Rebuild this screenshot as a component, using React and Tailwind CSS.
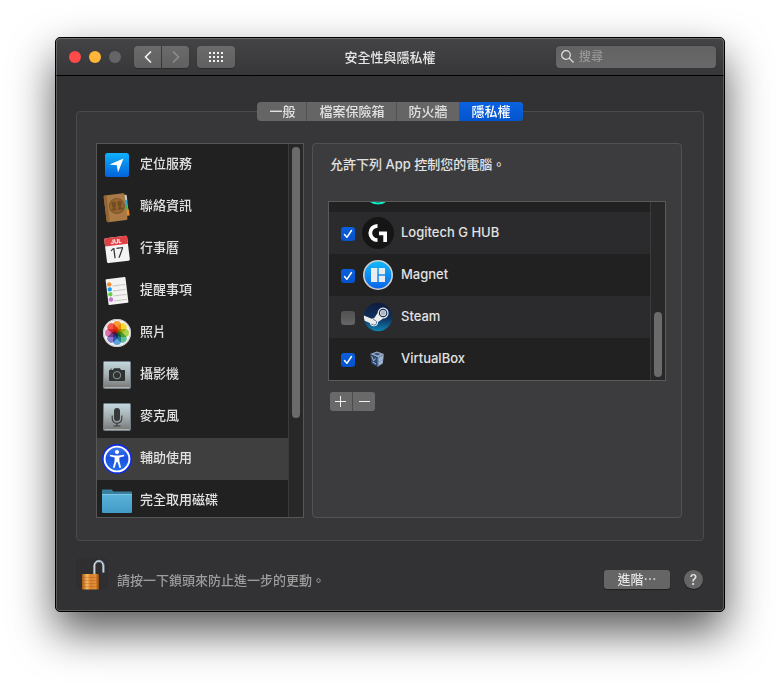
import { useState } from 'react';

function LocationIcon() {
  return (
    <svg viewBox="0 0 32 32" className="size-8">
      <defs>
        <linearGradient id="loc" x1="0" y1="0" x2="0" y2="1">
          <stop offset="0" stopColor="#0fb0fb" />
          <stop offset="1" stopColor="#0462da" />
        </linearGradient>
      </defs>
      <rect x="4" y="4" width="24" height="24" rx="2.5" fill="url(#loc)" />
      <path d="M22.5 9.5 17 23.5 15.8 16.2 8.5 15.6Z" fill="#fff" />
    </svg>
  );
}

function ContactsIcon() {
  return (
    <svg viewBox="0 0 32 32" className="size-8">
      <g transform="rotate(-7 16 16)">
        <rect x="23" y="5" width="4" height="6" fill="#c9ced2" />
        <rect x="23" y="10" width="4" height="6" fill="#35a7d8" />
        <rect x="23" y="15" width="4" height="6" fill="#43b95a" />
        <rect x="23" y="20" width="4.5" height="6" fill="#e98b22" />
        <rect x="4" y="3" width="21" height="27" rx="1.5" fill="#a97a45" />
        <path d="M4 4.5A1.5 1.5 0 0 1 5.5 3H7v27H5.5A1.5 1.5 0 0 1 4 28.5Z" fill="#936534" />
        <circle cx="16" cy="15" r="7.5" fill="#93662f" stroke="#7c5429" />
        <path d="M9.800 19c0-1.600 2.400-1.700 2.400-3-.9-.8-1.400-2-1.400-3.200 0-1.600 1-2.600 2.300-2.600s2.200 1 2.200 2.600c0 1.200-.2 2.300-1 3.200 0 1.300 1.200 1.400 1.200 3Z" fill="#744d23" />
        <path d="M16.500 19c0-1.600 1.300-1.700 1.300-3-.8-.9-1.100-2-1.100-3.200 0-1.600.9-2.600 2.200-2.600s2.300 1 2.300 2.600c0 1.200-.5 2.300-1.400 3.200 0 1.300 2.400 1.400 2.400 3Z" fill="#744d23" />
      </g>
    </svg>
  );
}

function CalendarIcon() {
  return (
    <svg viewBox="0 0 32 32" className="size-8">
      <g transform="rotate(-7 16 16)">
        <rect x="4.5" y="4" width="23" height="25" rx="1.5" fill="#f4f4f4" />
        <path d="M4.5 5.5A1.5 1.5 0 0 1 6 4h20a1.5 1.5 0 0 1 1.5 1.5V12h-23Z" fill="#df4144" />
        <text x="16" y="10.5" textAnchor="middle" fontSize="6" fontWeight="700" fill="#fff">JUL</text>
        <text x="16" y="25" textAnchor="middle" fontSize="14" fontWeight="400" fill="#333">17</text>
      </g>
    </svg>
  );
}

function RemindersIcon() {
  return (
    <svg viewBox="0 0 32 32" className="size-8">
      <g transform="rotate(-7 16 16)">
        <rect x="6" y="3" width="20" height="26" rx="1" fill="#f4f3f1" />
        <path d="M12 10.5h13M12 15.5h13M12 20.5h13M12 25.5h13" stroke="#bdbdbd" strokeWidth=".8" />
        <circle cx="9" cy="8.5" r="2.2" fill="#f58a2e" />
        <circle cx="9" cy="13.5" r="2.2" fill="#1d9cf0" />
        <circle cx="9" cy="18.5" r="2.2" fill="#62d044" />
        <circle cx="9" cy="23.7" r="2.2" fill="#c873dd" />
      </g>
    </svg>
  );
}

const petals = ['#f7941d', '#f5d51c', '#a8cf3a', '#4fb98b', '#4a9ce0', '#7c6fc4', '#d965a8', '#f2453a'];

function PhotosIcon() {
  return (
    <svg viewBox="0 0 32 32" className="size-8">
      <circle cx="16" cy="16" r="14" fill="#f4f4f4" />
      <circle cx="16" cy="16" r="13.5" fill="none" stroke="#c9c9c9" />
      <g className="isolate">
        {petals.map((color, i) => (
          <rect
            key={color}
            x="12"
            y="4"
            width="8"
            height="12"
            rx="4"
            fill={color}
            opacity=".9"
            className="mix-blend-multiply"
            transform={`rotate(${i * 45} 16 16)`}
          />
        ))}
      </g>
    </svg>
  );
}

function MetalTile({ children }) {
  return (
    <svg viewBox="0 0 32 32" className="size-8">
      <defs>
        <linearGradient id="metal" x1="0" y1="0" x2="0" y2="1">
          <stop offset="0" stopColor="#c3d8df" />
          <stop offset=".5" stopColor="#a3aeb0" />
          <stop offset="1" stopColor="#777776" />
        </linearGradient>
      </defs>
      <rect x="2.5" y="2.5" width="27" height="27" rx="1" fill="url(#metal)" stroke="#74818a" />
      <path d="M3.5 28.5h25" stroke="#b2b2b0" />
      {children}
    </svg>
  );
}

function CameraIcon() {
  return (
    <MetalTile>
      <path d="M8.5 11H12l1-1.8h6l1 1.8h3.500q.5 0 .5.6V21q0 1-1 1H9q-1 0-1-1v-9.400q0-.6.500-.6ZM9.200 9.800h2v.7h-2Z" fill="#2e3233" />
      <circle cx="16" cy="16.2" r="3.7" fill="#2e3233" stroke="#8f9697" strokeWidth="1" />
    </MetalTile>
  );
}

function MicIcon() {
  return (
    <MetalTile>
      <rect x="13" y="7" width="6" height="13" rx="3" fill="#35393a" />
      <path d="M11.2 14.5v3a4.800 4.800 0 0 0 9.600 0v-3M16 22.300v2.500M12.500 25h7" stroke="#35393a" strokeWidth="1.1" fill="none" />
    </MetalTile>
  );
}

function AccessibilityIcon() {
  return (
    <svg viewBox="0 0 32 32" className="size-8">
      <defs>
        <linearGradient id="acc" x1="0" y1="0" x2="0" y2="1">
          <stop offset="0" stopColor="#3f7df2" />
          <stop offset=".45" stopColor="#1a50dc" />
          <stop offset="1" stopColor="#2470f4" />
        </linearGradient>
      </defs>
      <circle cx="16" cy="16" r="15" fill="#0c2bea" />
      <circle cx="16" cy="16" r="12.4" fill="url(#acc)" stroke="#fff" strokeWidth="1.9" />
      <circle cx="16" cy="9" r="2.1" fill="#fff" />
      <path d="M9 11.8 14 12.6h4l5-.8.3 1.5-5 1.3.2 3.9 1.6 6-1.6.6L16.5 19h-1L13.5 25.100l-1.600-.6 1.600-6 .2-3.900-5-1.300Z" fill="#fff" />
    </svg>
  );
}

function FolderIcon() {
  return (
    <svg viewBox="0 0 32 32" className="size-8">
      <defs>
        <linearGradient id="folder" x1="0" y1="0" x2="0" y2="1">
          <stop offset="0" stopColor="#5bb3da" />
          <stop offset="1" stopColor="#429bc6" />
        </linearGradient>
      </defs>
      <path d="M1 5.5Q1 4.5 2 4.500h8.500l2 2H30q1 0 1 1V12H1Z" fill="#3a7f9d" />
      <path d="M1 9h30v18q0 1-1 1H2q-1 0-1-1Z" fill="url(#folder)" />
      <path d="M1 9.5h30" stroke="#7cc6e5" />
    </svg>
  );
}

function RingIcon() {
  return (
    <svg viewBox="0 0 32 32" className="size-8">
      <circle cx="16" cy="16" r="14" fill="#15191b" />
      <circle cx="16" cy="16" r="12.5" fill="none" stroke="#08efc8" strokeWidth="2.2" />
    </svg>
  );
}

function LogitechIcon() {
  return (
    <svg viewBox="0 0 32 32" className="size-8">
      <circle cx="16" cy="16" r="16" fill="#151515" />
      <path d="M15.5 8.800a7.200 7.200 0 0 0 0 14.400" fill="none" stroke="#fff" strokeWidth="3.8" />
      <path d="M17 14.5h8V25h-3.700v-6.800H17Z" fill="#fff" />
    </svg>
  );
}

function MagnetIcon() {
  return (
    <svg viewBox="0 0 32 32" className="size-8">
      <defs>
        <linearGradient id="magnet" x1="0" y1="0" x2="0" y2="1">
          <stop offset="0" stopColor="#13bafa" />
          <stop offset="1" stopColor="#0a62ea" />
        </linearGradient>
      </defs>
      <circle cx="16" cy="16" r="14.2" fill="url(#magnet)" stroke="#cfcfcf" strokeWidth="1.6" />
      <path d="M9 9h6.300v14H9ZM16.800 9H23v6.200h-6.200ZM16.800 16.800H23V23h-6.200Z" fill="#ececec" />
    </svg>
  );
}

function SteamIcon() {
  return (
    <svg viewBox="0 0 32 32" className="size-8">
      <defs>
        <linearGradient id="steam" x1="0" y1="0" x2="0" y2="1">
          <stop offset="0" stopColor="#101b3c" />
          <stop offset=".55" stopColor="#0d315f" />
          <stop offset="1" stopColor="#1184b5" />
        </linearGradient>
      </defs>
      <circle cx="16" cy="16" r="14.3" fill="url(#steam)" />
      <path d="M1.900 14.600 9.700 17.800a4 4 0 0 1 2.400-.6l3.500-5.100a5.500 5.500 0 1 1 5.500 5.400l-5 3.600a4.200 4.200 0 0 1-8.300.900L2.600 19.800Q1.700 17 1.900 14.600Z" fill="#ececec" />
      <circle cx="21.1" cy="12" r="3.7" fill="#ececec" stroke="#15305a" strokeWidth="1.2" />
      <circle cx="21.1" cy="12" r="2.4" fill="#aeb5bf" />
      <path d="m9.300 23 2 .8a2.400 2.400 0 1 0 1.800-4.500l-2-.8" fill="none" stroke="#3b6590" strokeWidth=".8" />
    </svg>
  );
}

function VirtualBoxIcon() {
  return (
    <svg viewBox="0 0 32 32" className="size-8">
      <path d="m8 11 7-2.500 7 2.500-6 3.500Z" fill="#9aabc2" />
      <path d="m8 11 7.500 3.500V24L9.500 20.500Z" fill="#2c4972" />
      <path d="m22 11-6.500 3.500V24l5.300-3.500Z" fill="#7f98b9" />
      <path d="m9.700 13.300 2 4.500 2-2.500M10.500 19l3.500 2M17.500 15.500l3-1.500-.4 2.200-2.400 1.400ZM17.500 19.500l2.600-1.500-.3 1.800-2.200 1.500Z" fill="none" stroke="#b9c7d8" strokeWidth=".9" />
      <path d="m11.500 11 3.500-1.200 3.500 1.200-2.800 1.600Z" fill="#35527c" />
    </svg>
  );
}

function PadlockIcon() {
  return (
    <svg viewBox="0 0 32 32" className="size-8 rounded-sm bg-[#2f2f31]">
      <defs>
        <linearGradient id="brass" x1="0" y1="0" x2="1" y2="0">
          <stop offset="0" stopColor="#a9580f" />
          <stop offset=".3" stopColor="#f6b865" />
          <stop offset=".5" stopColor="#d9822b" />
          <stop offset=".8" stopColor="#e08f3a" />
          <stop offset="1" stopColor="#8c450c" />
        </linearGradient>
      </defs>
      <path d="M18.500 16.500V8a4.500 5 0 0 1 9 0v6.500" fill="none" stroke="#7e8f9b" strokeWidth="2.4" />
      <path d="M18.200 16.500V8a4.500 5 0 0 1 9 0v6.500" fill="none" stroke="#e6edf1" strokeWidth="1" />
      <rect x="6" y="16" width="17" height="15.5" rx=".8" fill="url(#brass)" />
      <path d="M6 19.500h17M6 22.500h17M6 25.500h17M6 28.500h17" stroke="#a85a18" strokeWidth=".7" opacity=".5" />
    </svg>
  );
}

const tabs = ['一般', '檔案保險箱', '防火牆', '隱私權'];

const categories = [
  { label: '定位服務', Icon: LocationIcon },
  { label: '聯絡資訊', Icon: ContactsIcon },
  { label: '行事曆', Icon: CalendarIcon },
  { label: '提醒事項', Icon: RemindersIcon },
  { label: '照片', Icon: PhotosIcon },
  { label: '攝影機', Icon: CameraIcon },
  { label: '麥克風', Icon: MicIcon },
  { label: '輔助使用', Icon: AccessibilityIcon },
  { label: '完全取用磁碟', Icon: FolderIcon },
];

const apps = [
  { name: 'Logitech G HUB', Icon: LogitechIcon, allowed: true },
  { name: 'Magnet', Icon: MagnetIcon, allowed: true },
  { name: 'Steam', Icon: SteamIcon, allowed: false },
  { name: 'VirtualBox', Icon: VirtualBoxIcon, allowed: true },
];

const toolButton = 'flex h-[22px] items-center justify-center bg-linear-to-b from-[#6b6b6c] to-[#606061] shadow-[0_1px_1px_rgba(0,0,0,0.3)]';

function TitleBar() {
  return (
    <header className="grid h-[38px] grid-cols-[1fr_auto_1fr] items-center border-b border-black bg-linear-to-b from-[#444446] to-[#373739] px-2">
      <div className="flex items-center pl-[5px]">
        <div className="flex gap-2">
          <button type="button" aria-label="關閉" className="size-3 rounded-full bg-[#ff4a49]" />
          <button type="button" aria-label="縮到最小" className="size-3 rounded-full bg-[#ffb53a]" />
          <button type="button" aria-label="縮放" disabled className="size-3 rounded-full bg-[#656566]" />
        </div>
        <div className="ml-[13px] flex gap-px">
          <button type="button" aria-label="返回" className={`${toolButton} w-[27px] rounded-l`}>
            <svg viewBox="0 0 8 12" className="h-3 w-2" fill="none" stroke="#f2f2f2" strokeWidth="1.6">
              <path d="M7 .5 1.500 6 7 11.500" />
            </svg>
          </button>
          <button type="button" aria-label="前進" disabled className={`${toolButton} w-[27px] rounded-r`}>
            <svg viewBox="0 0 8 12" className="h-3 w-2" fill="none" stroke="#8d8d8e" strokeWidth="1.6">
              <path d="M1 .5 6.500 6 1 11.500" />
            </svg>
          </button>
        </div>
        <button type="button" aria-label="顯示全部" className={`${toolButton} ml-2 w-[38px] rounded`}>
          <svg viewBox="0 0 14 10" className="h-2.5 w-3.5" fill="#f2f2f2">
            {[0, 4, 8].map((y) => [0, 4, 8, 12].map((x) => <rect key={`${x}-${y}`} x={x} y={y} width="2" height="2" />))}
          </svg>
        </button>
      </div>
      <h1 className="text-[13px] leading-5 font-medium text-[#e6e6e6]">安全性與隱私權</h1>
      <label className="flex h-[22px] w-40 items-center justify-self-end rounded bg-linear-to-b from-[#626263] to-[#69696a] px-[5px] shadow-[0_0_1px_rgba(0,0,0,0.5)]">
        <svg viewBox="0 0 13 13" className="size-[13px] shrink-0" fill="none" stroke="#e2e2e2" strokeWidth="1.2">
          <circle cx="5" cy="5" r="4.3" />
          <path d="m8.200 8.200 4.300 4.300" />
        </svg>
        <input
          type="text"
          aria-label="搜尋"
          placeholder="搜尋"
          className="ml-[5px] w-full min-w-0 bg-transparent text-xs text-white outline-none placeholder:text-[#979798]"
        />
      </label>
    </header>
  );
}

function CategoryList() {
  const [selected, setSelected] = useState('輔助使用');

  return (
    <div className="flex h-[375px] w-52 shrink-0 border border-[#575758] bg-[#212122]">
      <ul className="flex-1 overflow-hidden">
        {categories.map(({ label, Icon }) => (
          <li key={label}>
            <button
              type="button"
              onClick={() => setSelected(label)}
              className={`flex h-[42px] w-full items-center gap-[7px] pl-1 text-left ${selected === label ? 'bg-[#3f3f3f]' : ''}`}
            >
              <Icon />
              <span className="pb-1 leading-5">{label}</span>
            </button>
          </li>
        ))}
      </ul>
      <div className="w-[15px] border-l border-[#3b3b3b] bg-[#282828] p-[3px]">
        <div className="h-[271px] w-2 rounded-full bg-[#6b6b6b]" />
      </div>
    </div>
  );
}

function AppRow({ name, Icon, allowed }) {
  return (
    <li className="h-[42px] shrink-0 odd:bg-[#212122] even:bg-[#2b2b2d]">
      <label className="flex h-full items-center pl-3">
        <span className="mt-0.5 grid size-3.5">
          <input
            type="checkbox"
            defaultChecked={allowed}
            className="peer col-start-1 row-start-1 size-3.5 appearance-none rounded-[3px] bg-linear-to-b from-[#515152] to-[#656566] checked:from-[#0c5fdc] checked:to-[#0452cc]"
          />
          <svg viewBox="0 0 14 14" className="pointer-events-none invisible col-start-1 row-start-1 size-3.5 peer-checked:visible" fill="none" stroke="#fff" strokeWidth="1.5">
            <path d="m3.500 7.500 2.400 2.800 4.600-6.800" strokeLinecap="round" strokeLinejoin="round" />
          </svg>
        </span>
        <span className="ml-[7px]"><Icon /></span>
        <span className="ml-[7px] pb-0.5 leading-5">{name}</span>
      </label>
    </li>
  );
}

function AccessPanel() {
  const editButton = 'flex h-[19px] w-[22px] items-center justify-center bg-[#69696a]';

  return (
    <section className="min-w-0 flex-1 rounded border border-[#525253] bg-[#3c3c3e] px-[15px] pt-2.5">
      <p className="pl-0.5 leading-5">允許下列 App 控制您的電腦。</p>
      <div className="mt-[27px] flex h-[180px] border border-[#5a5a5b] bg-[#212122]">
        {/* scrolled to the end, so the first row is cut off at the top */}
        <ul className="flex flex-1 flex-col justify-end overflow-hidden">
          <li aria-hidden="true" className="flex h-[42px] shrink-0 items-center pl-[33px]">
            <RingIcon />
          </li>
          {apps.map((app) => (
            <AppRow key={app.name} {...app} />
          ))}
        </ul>
        <div className="flex w-[15px] flex-col justify-end border-l border-[#3b3b3b] bg-[#282828] p-[3px]">
          <div className="h-[65px] w-2 rounded-full bg-[#6b6b6b]" />
        </div>
      </div>
      <div className="mt-[11px] ml-0.5 flex w-fit gap-px overflow-hidden rounded-[3px] bg-[#4c4c4d]">
        <button type="button" aria-label="加入" className={editButton}>
          <svg viewBox="0 0 12 11" className="h-[11px] w-3" stroke="#f0f0f0">
            <path d="M0 5.500h11M5.500 0v11" />
          </svg>
        </button>
        <button type="button" aria-label="移除" className={editButton}>
          <svg viewBox="0 0 12 11" className="h-[11px] w-3" stroke="#f0f0f0">
            <path d="M1 5.500h11" />
          </svg>
        </button>
      </div>
    </section>
  );
}

function App() {
  const [tab, setTab] = useState('隱私權');

  return (
    <div
      lang="zh-Hant"
      className="overflow-hidden bg-white px-[55px] pt-[37px] pb-[73px] font-['Inter','Noto_Sans_CJK_TC',sans-serif] text-[13px] font-medium text-[#e2e2e2]"
    >
      <main className="relative overflow-hidden rounded-[5px] border border-black bg-[#323234] shadow-[0_20px_44px_rgba(0,0,0,0.65)]">
        <TitleBar />

        <div className="px-5 pt-[26px]">
          <nav className="relative z-10 mx-auto flex h-[19px] w-fit overflow-hidden rounded bg-[#656566]">
            {tabs.map((label) => (
              <button
                key={label}
                type="button"
                onClick={() => setTab(label)}
                className={`px-3 leading-[19px] ${tab === label ? 'bg-linear-to-b from-[#0a62e0] to-[#0455cd] text-white' : 'shadow-[inset_-1px_0_0_#525253]'}`}
              >
                {label}
              </button>
            ))}
          </nav>

          <div className="-mt-2.5 flex gap-2 rounded border border-[#4b4b4d] bg-[#373739] pt-[31px] pr-[21px] pb-[22px] pl-[19px]">
            <CategoryList />
            <AccessPanel />
          </div>
        </div>

        <footer className="flex items-end pt-[17px] pr-[21px] pb-[21px] pl-5">
          <button type="button" aria-label="鎖定">
            <PadlockIcon />
          </button>
          <p className="ml-[9px] leading-5 text-[#9d9d9e]">請按一下鎖頭來防止進一步的更動。</p>
          <div className="ml-auto flex gap-3.5 pb-px">
            <button type="button" className="h-[19px] w-[66px] rounded-[3px] bg-[#656566] leading-[19px] shadow-[0_1px_1px_rgba(0,0,0,0.4)]">
              進階⋯
            </button>
            <button type="button" aria-label="輔助說明" className="size-[19px] rounded-full bg-[#656566] text-sm leading-[19px] shadow-[0_1px_1px_rgba(0,0,0,0.4)]">
              ?
            </button>
          </div>
        </footer>

        {/* light edge just inside the window frame */}
        <div className="pointer-events-none absolute inset-0 rounded inset-ring inset-ring-white/20" />
      </main>
    </div>
  );
}

export default App;
